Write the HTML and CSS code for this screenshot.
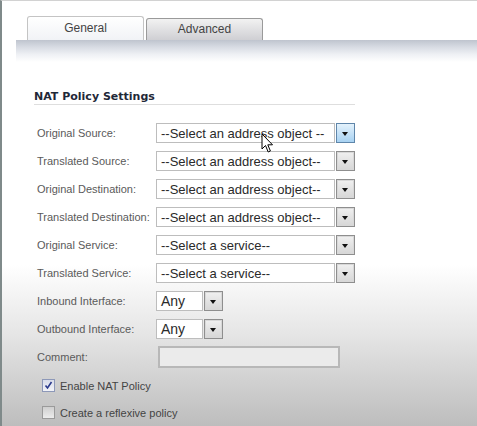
FILE: index.html
```html
<!DOCTYPE html>
<html lang="en">
<head>
  <meta charset="UTF-8">
  <meta name="viewport" content="width=device-width, initial-scale=1.0">
  <title>NAT Policy</title>
  <link rel="stylesheet" href="styles.css">
</head>
<body>
  <div class="window">
    <div class="tabs">
      <div class="tab active">General</div>
      <div class="tab">Advanced</div>
    </div>
    <div class="band"></div>

    <div class="panel">
      <h2 class="section-title">NAT Policy Settings</h2>

      <div class="form">
        <div class="row">
          <label>Original Source:</label>
          <div class="select wide hover"><span class="value">--Select an address object --</span><span class="arrow"></span></div>
        </div>
        <div class="row">
          <label>Translated Source:</label>
          <div class="select wide"><span class="value">--Select an address object--</span><span class="arrow"></span></div>
        </div>
        <div class="row">
          <label>Original Destination:</label>
          <div class="select wide"><span class="value">--Select an address object--</span><span class="arrow"></span></div>
        </div>
        <div class="row">
          <label>Translated Destination:</label>
          <div class="select wide"><span class="value">--Select an address object--</span><span class="arrow"></span></div>
        </div>
        <div class="row">
          <label>Original Service:</label>
          <div class="select wide"><span class="value">--Select a service--</span><span class="arrow"></span></div>
        </div>
        <div class="row">
          <label>Translated Service:</label>
          <div class="select wide"><span class="value">--Select a service--</span><span class="arrow"></span></div>
        </div>
        <div class="row">
          <label>Inbound Interface:</label>
          <div class="select small"><span class="value">Any</span><span class="arrow"></span></div>
        </div>
        <div class="row">
          <label>Outbound Interface:</label>
          <div class="select small"><span class="value">Any</span><span class="arrow"></span></div>
        </div>
        <div class="row">
          <label>Comment:</label>
          <div class="text-input"></div>
        </div>
      </div>

      <div class="checks">
        <div class="check-row">
          <span class="checkbox checked">
            <svg width="9" height="9" viewBox="0 0 9 9"><path d="M1.5 4.5 L3.5 7 L7.5 1" fill="none" stroke="#2b3a8c" stroke-width="1.6"/></svg>
          </span>
          <span class="check-label">Enable NAT Policy</span>
        </div>
        <div class="check-row">
          <span class="checkbox"></span>
          <span class="check-label">Create a reflexive policy</span>
        </div>
      </div>
    </div>

    <svg class="cursor" width="13" height="21" viewBox="0 0 13 21">
      <path d="M1 1 L1 16 L4.5 12.5 L7.2 19 L9.4 18 L6.8 11.8 L11.5 11.8 Z" fill="#fff" stroke="#000" stroke-width="1"/>
    </svg>
  </div>
</body>
</html>
```

FILE: styles.css
```css
/* General Styles */
* {
  margin: 0;
  padding: 0;
  box-sizing: border-box;
}

body {
  font-family: 'Liberation Sans', Arial, sans-serif;
  color: #333;
  background: #fff;
}

.window {
  position: relative;
  height: 426px;
  border-left: 2px solid #7f8a8a;
  border-top: 1px solid #d2d2d2;
  background: linear-gradient(to bottom, #fff 0%, #fff 62%, #e6e6e6 78%, #bdbdbd 100%);
  overflow: hidden;
}

/* Tabs */
.tabs {
  display: flex;
  align-items: flex-end;
  gap: 2px;
  padding: 15px 0 0 25px;
  height: 39px;
}

.tab {
  width: 117px;
  height: 22px;
  display: flex;
  align-items: center;
  justify-content: center;
  font-size: 12px;
  color: #444;
  border: 1px solid #9a9a9a;
  border-bottom: none;
  border-radius: 3px 3px 0 0;
  background: linear-gradient(to bottom, #f2f2f2, #cfcfd3);
  padding-bottom: 1px;
}

.tab.active {
  height: 24px;
  border-color: #c4c4c4;
  background: linear-gradient(to bottom, #fff, #f1f3f6);
  padding-bottom: 1px;
}

.band {
  margin-left: 14px;
  height: 22px;
  background: linear-gradient(to bottom, #bfc4ce 0%, #d6dae2 30%, #eef0f4 65%, #fff 100%);
}

/* Panel */
.panel {
  padding-left: 32px;
}

.section-title {
  width: 321px;
  margin-top: 28px;
  font-family: 'DejaVu Sans', Verdana, sans-serif;
  font-size: 11px;
  font-weight: bold;
  line-height: 14px;
  color: #1f2838;
  border-bottom: 1px solid #dedede;
}

.form {
  margin-top: 14px;
}

.row {
  display: flex;
  align-items: center;
  height: 28px;
  padding-left: 3px;
}

.row label {
  width: 119px;
  font-size: 11px;
  color: #5a5a5a;
}

/* Select boxes */
.select {
  display: flex;
  height: 20px;
  font-size: 13px;
  color: #2a2a2a;
}

.select .value {
  flex: 1;
  display: flex;
  align-items: center;
  padding-left: 4px;
  border: 1px solid #bdbdbd;
  background: #fff;
  white-space: nowrap;
  overflow: hidden;
}

.select.wide {
  width: 199px;
}

.select.small {
  width: 67px;
}

.select.small .value {
  font-size: 14px;
}

.arrow {
  position: relative;
  width: 19px;
  border: 1px solid #8e8e8e;
  box-shadow: inset 0 0 0 1px #d8d8d8;
  background: linear-gradient(to bottom, #f0f0f0, #d6d6d6);
  margin-left: 1px;
}

.arrow::after {
  content: '';
  position: absolute;
  left: 5px;
  top: 8px;
  border-left: 3.5px solid transparent;
  border-right: 3.5px solid transparent;
  border-top: 4px solid #111;
}

.select.hover .arrow {
  border-color: #5f86aa;
  box-shadow: none;
  background: linear-gradient(to bottom, #e4f2fc, #a8d2f2);
}

.text-input {
  width: 182px;
  height: 22px;
  margin-left: 2px;
  border: 2px solid #b8b8b8;
  background: #ebebeb;
}

/* Checkboxes */
.checks {
  margin-top: 1px;
}

.check-row {
  display: flex;
  align-items: center;
  gap: 5px;
  height: 27px;
  padding-left: 8px;
}

.checkbox {
  width: 13px;
  height: 13px;
  display: flex;
  align-items: center;
  justify-content: center;
  border: 1px solid #9a9a9a;
  background: linear-gradient(to bottom, #cfcfcf, #ececec);
}

.checkbox.checked {
  border-color: #8d98b8;
  background: linear-gradient(to bottom, #d8dcea, #f2f3f8);
}

.check-label {
  font-size: 11px;
  color: #444;
}

.cursor {
  position: absolute;
  left: 259px;
  top: 132px;
}
```
